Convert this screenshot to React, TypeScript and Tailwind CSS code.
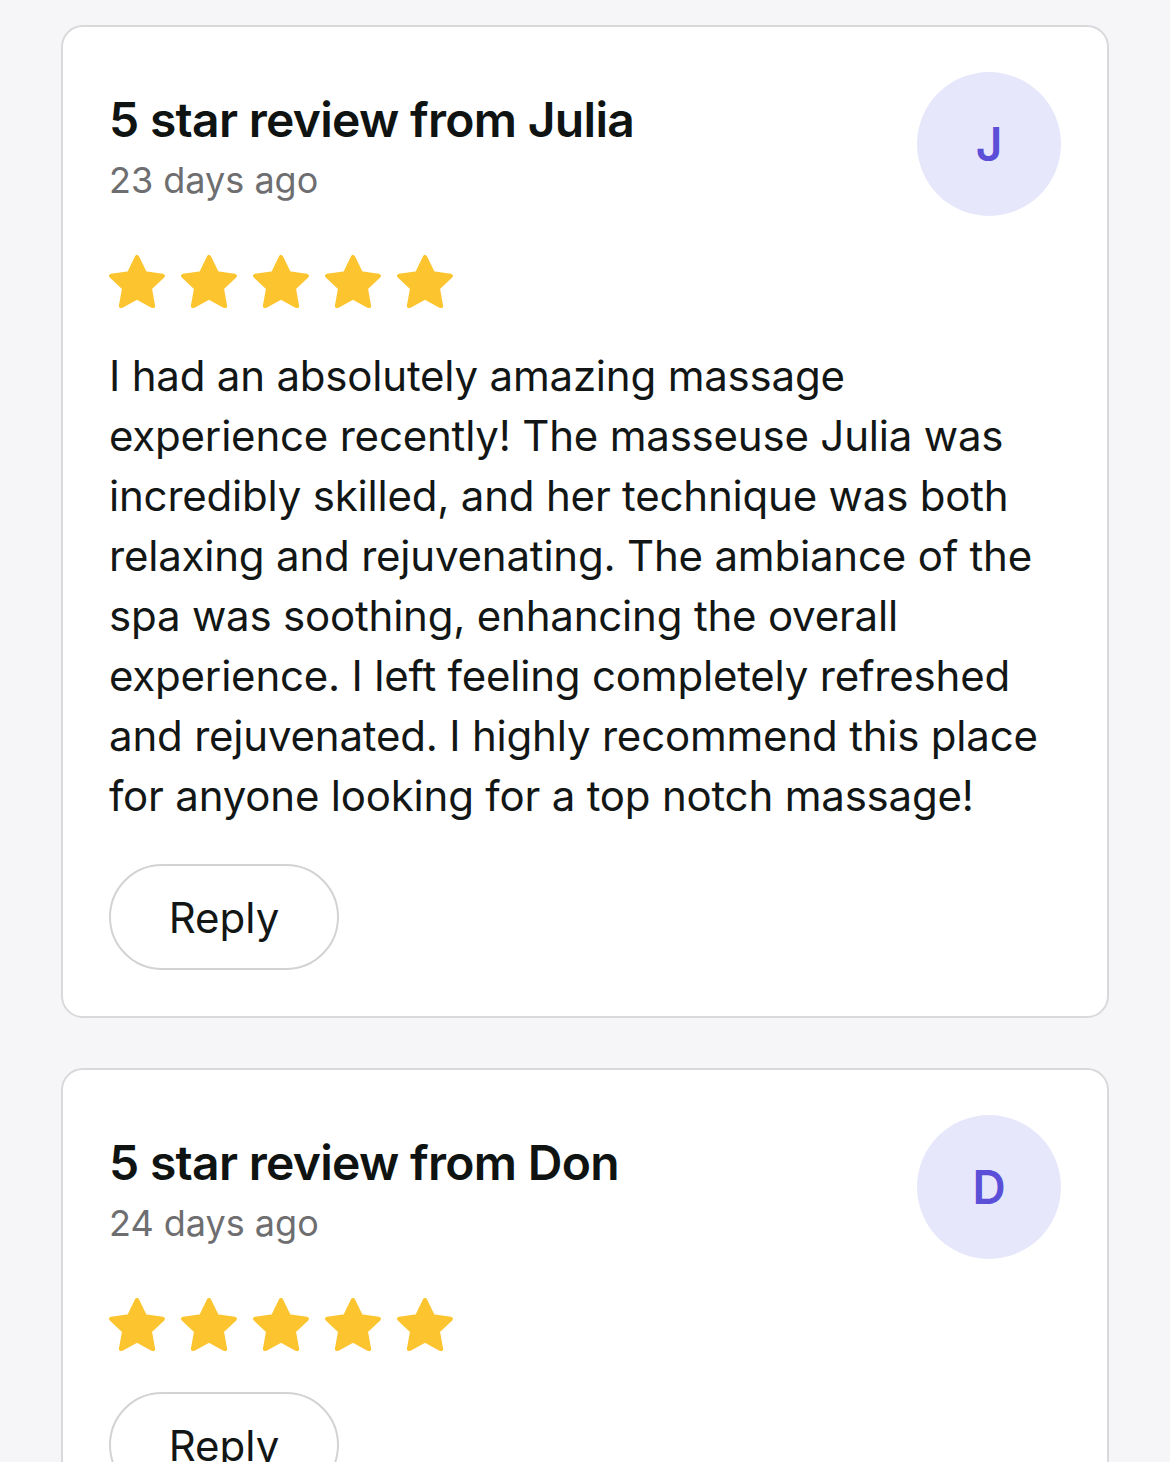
const reviews = [
  {
    name: 'Julia',
    initial: 'J',
    when: '23 days ago',
    text: 'I had an absolutely amazing massage experience recently! The masseuse Julia was incredibly skilled, and her technique was both relaxing and rejuvenating. The ambiance of the spa was soothing, enhancing the overall experience. I left feeling completely refreshed and rejuvenated. I highly recommend this place for anyone looking for a top notch massage!',
  },
  {
    name: 'Don',
    initial: 'D',
    when: '24 days ago',
    text: '',
  },
];

function Star() {
  return (
    <svg width="56" height="53" viewBox="1.9 1.8 20.2 19.2" className="shrink-0">
      <path
        d="M12 2.6l2.85 5.9 6.45.85-4.7 4.5 1.17 6.4L12 17.15 6.23 20.25l1.17-6.4-4.7-4.5 6.45-.85z"
        fill="#fcc42f"
        stroke="#fcc42f"
        strokeWidth="1.6"
        strokeLinejoin="round"
      />
    </svg>
  );
}

function ReviewCard({ name, initial, when, text }: (typeof reviews)[number]) {
  return (
    <div className="bg-white border-2 border-[#d9d9dc] rounded-[22px] pl-[46px] pr-[46px] pt-[45px] pb-[46px]">
      <div className="flex items-start justify-between">
        <div className="pt-[20px]">
          <h2 className="text-[48px] leading-[56px] font-semibold text-[#0f1413] tracking-[-0.7px]">
            5 star review from {name}
          </h2>
          <p className="text-[36px] leading-[44px] text-[#6e6e70] mt-[10px]">{when}</p>
        </div>
        <div className="w-[144px] h-[144px] rounded-full bg-[#e7e7fb] flex items-center justify-center shrink-0">
          <span className="text-[46px] font-semibold text-[#5b4fd8]">{initial}</span>
        </div>
      </div>

      <div className="flex gap-[16px] mt-[39px]">
        {[0, 1, 2, 3, 4].map((i) => (
          <Star key={i} />
        ))}
      </div>

      {text && (
        <p className="mt-[38px] text-[42px] leading-[60px] text-[#121615] tracking-[-0.2px]">{text}</p>
      )}

      <button
        className={
          text
            ? 'mt-[38px] w-[230px] h-[106px] rounded-full border-2 border-[#d3d3d5] bg-white text-[42px] text-[#121615]'
            : 'mt-[41px] w-[230px] h-[106px] rounded-full border-2 border-[#d3d3d5] bg-white text-[42px] text-[#121615]'
        }
      >
        Reply
      </button>
    </div>
  );
}

export default function App() {
  return (
    <div
      className="min-h-[1462px] bg-[#f6f6f9] px-[61px] pt-[25px] flex flex-col gap-[50px]"
      style={{ fontFamily: 'Inter, "Noto Sans", sans-serif' }}
    >
      {reviews.map((r) => (
        <ReviewCard key={r.name} {...r} />
      ))}
    </div>
  );
}
